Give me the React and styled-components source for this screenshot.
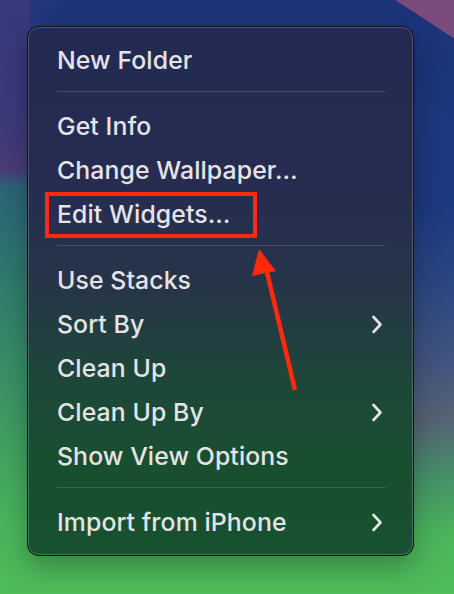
import React from "react";
import styled, { createGlobalStyle } from "styled-components";

const Global = createGlobalStyle`
  html, body { margin: 0; padding: 0; }
  body { width: 454px; height: 594px; overflow: hidden; font-family: Inter, "Noto Sans", sans-serif; }
`;

const Desktop = styled.div`
  position: relative;
  width: 454px;
  height: 594px;
  box-sizing: border-box;
  padding: 26px 0 0 27px;
  background:
    linear-gradient(to bottom left, #7a4b7c 50%, transparent 51%) right top / 58px 38px no-repeat,
    linear-gradient(180deg, #37397d 0%, #3d3a7c 20%, #4a3c78 28.5%, #2c6479 31.5%, #2e7870 45%, #3a9466 65%, #4ab55b 88%, #4fbc5a 100%) left top / 30px 100% no-repeat,
    linear-gradient(90deg, #2e3a7e 0, transparent 70px) left top / 100% 30px no-repeat,
    linear-gradient(180deg, #1c347a 0%, #1c3a80 35%, #2b4782 48%, #44567e 62%, #566474 71%, #45906a 80%, #4bb55b 90%, #50bc5a 100%);
`;

const Menu = styled.div`
  width: 387px;
  box-sizing: border-box;
  padding: 11px 0 11px;
  border-radius: 12px;
  border: 1px solid rgba(10, 12, 20, 0.85);
  box-shadow: inset 0 0 0 1px rgba(255, 255, 255, 0.2), 0 10px 30px rgba(0, 0, 0, 0.3);
  background: linear-gradient(180deg, #232a52 0%, #262c50 30%, #273449 48%, #1d4838 68%, #18502f 85%, #17512f 100%);
  color: #e4e4e8;
`;

const Row = styled.div`
  height: 44px;
  display: flex;
  align-items: center;
  justify-content: space-between;
  padding: 0 30px 0 29px;
  font-size: 24.8px;
  font-weight: 450;
  letter-spacing: 0.1px;
  line-height: 1;
`;

const Separator = styled.div`
  height: 22px;
  display: flex;
  align-items: flex-start;
  padding: 9px 27px 0 29px;
  box-sizing: border-box;
  &::after {
    content: "";
    flex: 1;
    height: 1px;
    background: rgba(255, 255, 255, 0.14);
  }
`;

const Highlight = styled.div`
  position: absolute;
  left: 45px;
  top: 192px;
  width: 212px;
  height: 46px;
  box-sizing: border-box;
  border: 4px solid #ff2a0c;
`;

const ArrowSvg = styled.svg`
  position: absolute;
  left: 240px;
  top: 240px;
`;

const Chevron = () => (
  <svg width="12" height="19" viewBox="0 0 12 19">
    <polyline points="2.5,2 9.5,9.5 2.5,17" fill="none" stroke="#e4e4e8" strokeWidth="2.6" strokeLinecap="round" strokeLinejoin="round" />
  </svg>
);

const items = [
  ["New Folder"],
  "sep",
  ["Get Info"],
  ["Change Wallpaper…"],
  ["Edit Widgets…"],
  "sep",
  ["Use Stacks"],
  ["Sort By", true],
  ["Clean Up"],
  ["Clean Up By", true],
  ["Show View Options"],
  "sep",
  ["Import from iPhone", true],
];

export default function App() {
  return (
    <>
      <Global />
      <Desktop>
        <Menu>
          {items.map((it, i) =>
            it === "sep" ? (
              <Separator key={i} />
            ) : (
              <Row key={i}>
                <span>{it[0]}</span>
                {it[1] && <Chevron />}
              </Row>
            )
          )}
        </Menu>
        <Highlight />
        <ArrowSvg width="70" height="160" viewBox="0 0 70 160">
          <line x1="55" y1="150" x2="27" y2="32" stroke="#ff2a0c" strokeWidth="4.5" strokeLinecap="butt" />
          <polygon points="19,9 12,36 36,31" fill="#ff2a0c" />
        </ArrowSvg>
      </Desktop>
    </>
  );
}
